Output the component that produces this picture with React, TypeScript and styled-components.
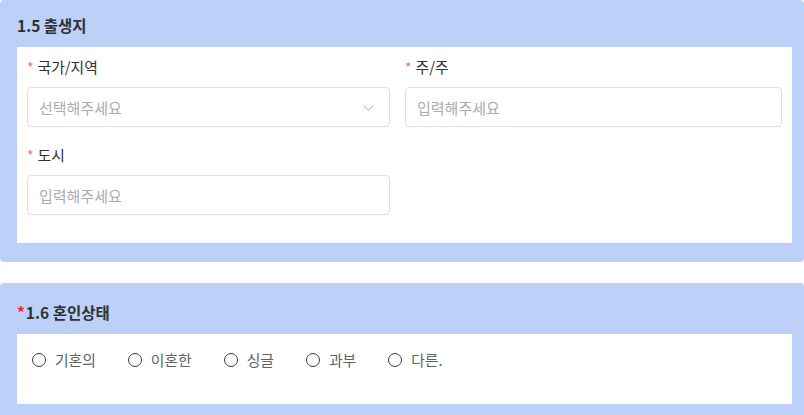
import React from "react";
import styled, { createGlobalStyle } from "styled-components";

const Global = createGlobalStyle`
  html, body { margin: 0; padding: 0; background: #ffffff; overflow: hidden; }
  body { font-family: "Noto Sans CJK KR", "Noto Sans", sans-serif; }
  * { box-sizing: border-box; }
`;

const Page = styled.div`
  display: flex;
  flex-direction: column;
  gap: 21px;
  width: 804px;
`;

const Card = styled.section<{ $first?: boolean }>`
  background: #bdd0f7;
  border-radius: 4px;
  padding: ${(p) => (p.$first ? "14px" : "18px")} 12px 19px 17px;
  display: flex;
  flex-direction: column;
`;

const Title = styled.h3`
  margin: 0;
  height: 33px;
  font-size: 15.5px;
  font-weight: 700;
  color: #303133;
  line-height: 22px;
  display: flex;
  align-items: flex-start;
`;

const TitleStar = styled.span`
  color: #f5222d;
  margin-right: 1px;
`;

const Body = styled.div`
  background: #ffffff;
  padding: 10px 10px 28px 10px;
  display: grid;
  grid-template-columns: 363px 377px;
  column-gap: 15px;
  row-gap: 18px;
`;

const Field = styled.div`
  display: flex;
  flex-direction: column;
`;

const Label = styled.label`
  font-size: 14.8px;
  color: #303133;
  line-height: 20px;
  height: 20px;
  margin-bottom: 10px;
  display: flex;
  align-items: center;
`;

const Star = styled.span`
  color: #f56c6c;
  margin-right: 4px;
  font-size: 14px;
`;

const InputBox = styled.div`
  height: 40px;
  border: 1px solid #dcdfe6;
  border-radius: 4px;
  padding: 0 14px 0 11px;
  display: flex;
  align-items: center;
  justify-content: space-between;
  font-size: 15px;
  color: #a8abb2;
  background: #fff;
`;

const RadioBody = styled.div`
  background: #ffffff;
  padding: 15px 15px 24px 15px;
  display: flex;
  height: 70px;
  align-items: flex-start;
`;

const RadioItem = styled.label`
  display: flex;
  align-items: center;
  margin-right: 32px;
  font-size: 14.8px;
  color: #606266;
  line-height: 22px;
`;

const Circle = styled.span`
  width: 14px;
  height: 14px;
  border-radius: 50%;
  border: 1.3px solid #3a3a3a;
  margin-right: 9px;
  background: #fff;
`;

const Chevron = () => (
  <svg width="13" height="13" viewBox="0 0 13 13" fill="none">
    <path d="M1.5 4.5 L6.5 9 L11.5 4.5" stroke="#a8abb2" strokeWidth="1" />
  </svg>
);

const radios = ["기혼의", "이혼한", "싱글", "과부", "다른."];

export default function App() {
  return (
    <>
      <Global />
      <Page>
        <Card $first>
          <Title>1.5 출생지</Title>
          <Body>
            <Field>
              <Label>
                <Star>*</Star>국가/지역
              </Label>
              <InputBox>
                <span>선택해주세요</span>
                <Chevron />
              </InputBox>
            </Field>
            <Field>
              <Label>
                <Star>*</Star>주/주
              </Label>
              <InputBox>입력해주세요</InputBox>
            </Field>
            <Field>
              <Label>
                <Star>*</Star>도시
              </Label>
              <InputBox>입력해주세요</InputBox>
            </Field>
          </Body>
        </Card>
        <Card>
          <Title>
            <TitleStar>*</TitleStar>1.6 혼인상태
          </Title>
          <RadioBody>
            {radios.map((r) => (
              <RadioItem key={r}>
                <Circle />
                {r}
              </RadioItem>
            ))}
          </RadioBody>
        </Card>
      </Page>
    </>
  );
}
